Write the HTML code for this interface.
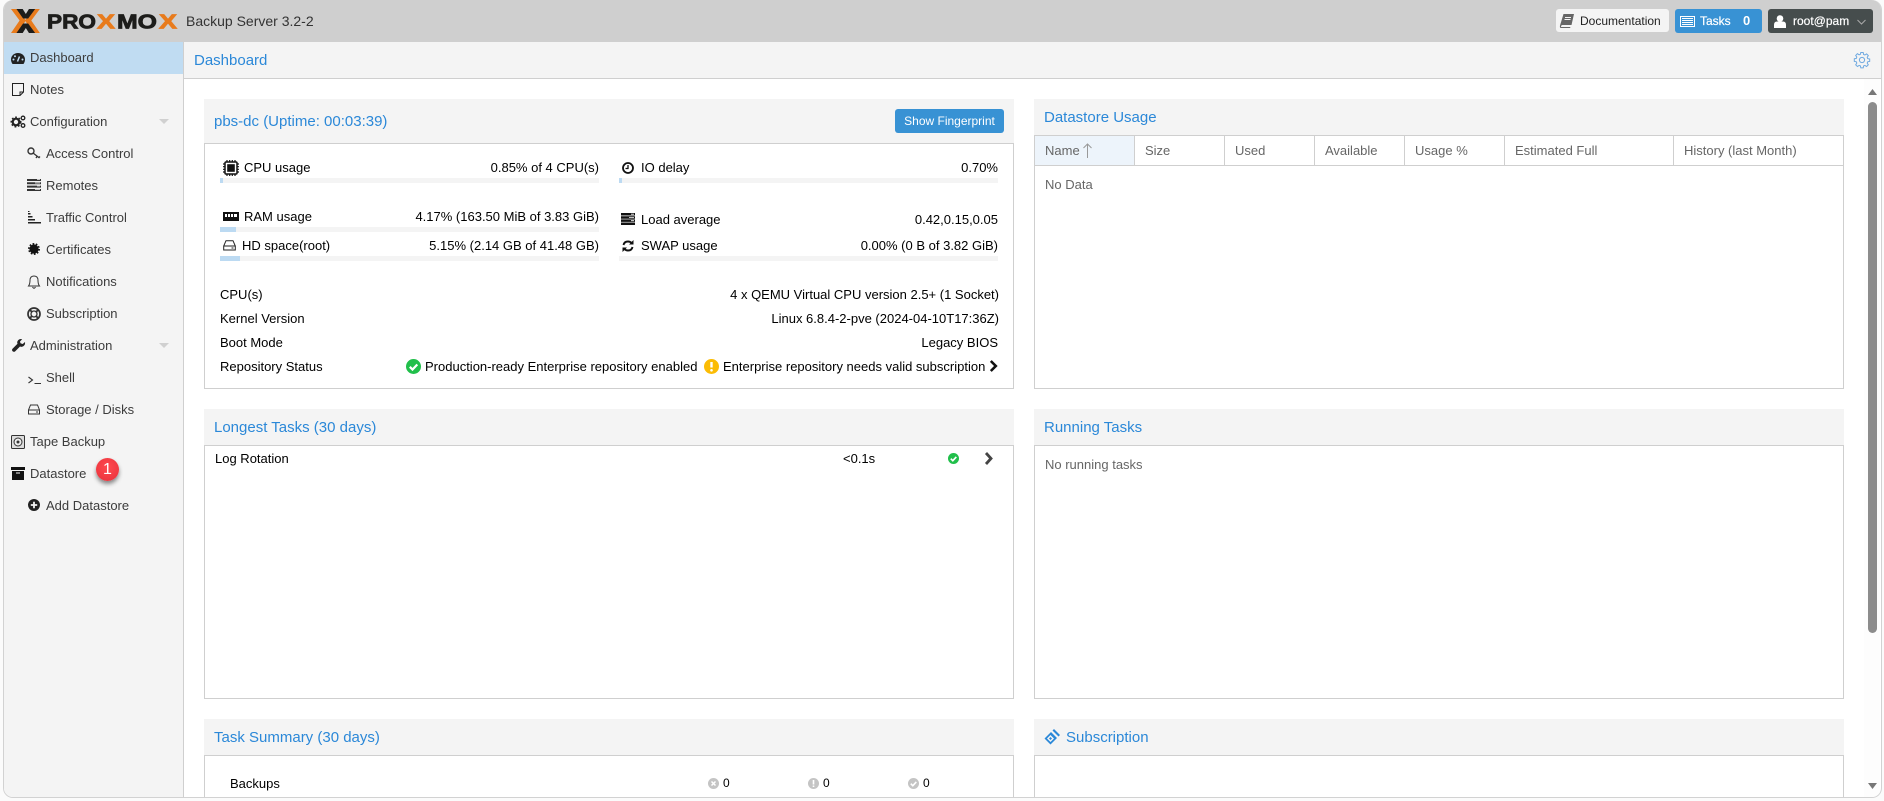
<!DOCTYPE html>
<html><head><meta charset="utf-8"><title>Proxmox Backup Server</title>
<style>
html,body{margin:0;padding:0;width:1884px;height:801px;overflow:hidden;background:#fbfbfb;font-family:"Liberation Sans",Arial,sans-serif;font-size:13px;color:#000}
.a{position:absolute;white-space:nowrap;line-height:20px;margin-top:1px}
.n{margin-top:0}
.b{position:absolute}
.r{text-align:right}
#w{position:absolute;left:3px;top:0;width:1877px;height:797px;border:1px solid #d2d2d2;border-top:0;border-radius:10px;overflow:hidden;background:#fff}
#in{position:absolute;left:-4px;top:0;width:1884px;height:801px}
.s{color:#3c3c3c}
.t{font-size:15px;color:#2b88d8}
.hd{position:absolute;background:#f4f4f4}
.bd{position:absolute;border:1px solid #cfcfcf;box-sizing:border-box;background:#fff}
.bar{position:absolute;height:5px;background:#f4f4f4}
.bar i{display:block;height:5px;background:#bcdaf2}
.th{color:#666}
.c{position:absolute;top:135px;height:31px;width:1px;background:#cfcfcf}
svg{position:absolute;overflow:visible}
</style></head><body>
<div id="w"><div id="in">

<!-- top bar -->
<div class="b" style="left:0;top:0;width:1884px;height:42px;background:#cfcfcf"></div>
<svg style="left:11px;top:9px" width="170" height="25" viewBox="0 0 170 25">
<g transform="scale(.78 1)">
<path d="M0 0h9l10 11.500L9 24H0l11-12.500z" fill="#e87b1c"/>
<path d="M37 0h-9L18 11.500 28 24h9L26 11.500z" fill="#e87b1c"/>
<path d="M7 0h8l4 5 4-5h8L22 9.500h-6.500z" fill="#1d1d1b"/>
<path d="M7 24h8l4-5 4 5h8L22 14.500h-6.500z" fill="#1d1d1b"/>
</g>
<text x="36" y="19.500" font-family="Liberation Sans" font-weight="700" font-size="20" textLength="49" lengthAdjust="spacingAndGlyphs" fill="#1d1d1b" stroke="#1d1d1b" stroke-width=".8">PRO</text>
<text x="86" y="19.500" font-family="Liberation Sans" font-weight="700" font-size="20" textLength="18" lengthAdjust="spacingAndGlyphs" fill="#e87b1c" stroke="#e87b1c" stroke-width=".8">X</text>
<text x="106" y="19.500" font-family="Liberation Sans" font-weight="700" font-size="20" textLength="40" lengthAdjust="spacingAndGlyphs" fill="#1d1d1b" stroke="#1d1d1b" stroke-width=".8">MO</text>
<text x="148" y="19.500" font-family="Liberation Sans" font-weight="700" font-size="20" textLength="18" lengthAdjust="spacingAndGlyphs" fill="#e87b1c" stroke="#e87b1c" stroke-width=".8">X</text>
</svg>
<div class="a n" style="left:186px;top:11px;font-size:14px;color:#333">Backup Server 3.2-2</div>

<div class="b" style="left:1556px;top:9px;width:113px;height:23px;background:#f4f4f4;border-radius:3px"></div>
<svg style="left:1560px;top:14px" width="14" height="14" viewBox="0 0 14 14"><path d="M3.500 0H14l-2.500 11H2.500Q1 11 1 13h9.500L10 14H1Q-.5 14 0 11.500zM5 3h6v1H5zM4.500 5h6v1h-6z" fill="#666" fill-rule="evenodd"/></svg>
<div class="a n" style="left:1580px;top:11px;color:#222;font-size:12px">Documentation</div>

<div class="b" style="left:1675px;top:9px;width:87px;height:24px;background:#3892d4;border-radius:3px"></div>
<svg style="left:1680px;top:16px" width="15" height="11" viewBox="0 0 15 11"><rect x=".5" y=".5" width="14" height="10" fill="#3892d4" stroke="#fff"/><path d="M2 2.500h11M2 4.500h11M2 6.500h11M2 8.500h11" stroke="#fff"/></svg>
<div class="a n" style="left:1700px;top:11px;color:#fff;font-size:12px;-webkit-text-stroke:.2px #fff">Tasks</div>
<div class="a n" style="left:1743px;top:11px;color:#fff;font-weight:700">0</div>

<div class="b" style="left:1768px;top:9px;width:105px;height:24px;background:#464d4d;border-radius:3px"></div>
<svg style="left:1774px;top:15px" width="12" height="13" viewBox="0 0 12 13"><circle cx="6" cy="3.500" r="3.300" fill="#fff"/><path d="M0 13V10q0-3.500 3-3.500h6q3 0 3 3.500v3z" fill="#fff"/></svg>
<div class="a n" style="left:1793px;top:11px;color:#fff;font-size:12px;-webkit-text-stroke:.2px #fff">root@pam</div>
<svg style="left:1857px;top:19px" width="9" height="6" viewBox="0 0 9 6"><path d="M.5 1l4 4 4-4" fill="none" stroke="#aaa"/></svg>

<!-- sidebar -->
<div class="b" style="left:0;top:42px;width:183px;height:759px;background:#f4f4f4;border-right:1px solid #cfcfcf"></div>
<div class="b" style="left:0;top:42px;width:183px;height:32px;background:#c0dcf2"></div>
<div class="a s" style="left:30px;top:47px">Dashboard</div>
<div class="a s" style="left:30px;top:79px">Notes</div>
<div class="a s" style="left:30px;top:111px">Configuration</div>
<div class="a s" style="left:46px;top:143px">Access Control</div>
<div class="a s" style="left:46px;top:175px">Remotes</div>
<div class="a s" style="left:46px;top:207px">Traffic Control</div>
<div class="a s" style="left:46px;top:239px">Certificates</div>
<div class="a s" style="left:46px;top:271px">Notifications</div>
<div class="a s" style="left:46px;top:303px">Subscription</div>
<div class="a s" style="left:30px;top:335px">Administration</div>
<div class="a s" style="left:46px;top:367px">Shell</div>
<div class="a s" style="left:46px;top:399px">Storage / Disks</div>
<div class="a s" style="left:30px;top:431px">Tape Backup</div>
<div class="a s" style="left:30px;top:463px">Datastore</div>
<div class="a s" style="left:46px;top:495px">Add Datastore</div>

<!-- sidebar icons -->
<svg style="left:11px;top:53px" width="14" height="11" viewBox="0 0 14 11"><path d="M7 0c4 0 7 2.800 7 6.500 0 1.600-.5 3-1.500 4.500h-11C.5 9.500 0 8.100 0 6.500 0 2.800 3 0 7 0z" fill="#222"/><path d="M6.500 8.500L8.500 3.500" stroke="#c0dcf2" stroke-width="1.500"/><circle cx="2.500" cy="6.500" r="1" fill="#c0dcf2"/><circle cx="4" cy="3.200" r="1" fill="#c0dcf2"/><circle cx="11.500" cy="6.500" r="1" fill="#c0dcf2"/></svg>
<svg style="left:12px;top:83px" width="12" height="13" viewBox="0 0 12 13"><path d="M.5.500h11v8.500l-3.500 3.500H.5zM8 12.500V9h3.500" fill="none" stroke="#222"/></svg>
<svg style="left:11px;top:115px" width="15" height="13" viewBox="0 0 15 13"><circle cx="5" cy="7" r="3.300" fill="none" stroke="#222" stroke-width="2.200"/><circle cx="5" cy="7" r="4.800" fill="none" stroke="#222" stroke-width="1.400" stroke-dasharray="1.800 1.800"/><circle cx="12" cy="3" r="1.800" fill="none" stroke="#222" stroke-width="1.300"/><circle cx="12" cy="10.500" r="1.800" fill="none" stroke="#222" stroke-width="1.300"/></svg>
<svg style="left:27px;top:147px" width="14" height="13" viewBox="0 0 14 13"><circle cx="4" cy="4" r="3" fill="none" stroke="#333" stroke-width="1.400"/><path d="M6 6l6.500 5M10 9.500l-1 1.500M12 10.500l1-1" stroke="#333" stroke-width="1.300" fill="none"/></svg>
<svg style="left:27px;top:179px" width="14" height="12" viewBox="0 0 14 12"><path d="M0 0h14v2H0zM0 3.300h14v2H0zM0 6.600h14v2H0zM0 10h14v2H0z" fill="#333"/><path d="M10 .5h3M8 4h5M10 7h3M8 10.500h5" stroke="#f4f4f4" stroke-width=".8"/></svg>
<svg style="left:28px;top:211px" width="13" height="13" viewBox="0 0 13 13"><path d="M0 11h13v1.500H0zM0 8h7v1.500H0zM0 5h4.500v1.500H0zM0 2h2.500v1.500H0zM0 0h1.500v1H0z" fill="#222"/></svg>
<svg style="left:28px;top:243px" width="12" height="12" viewBox="0 0 12 12"><circle cx="6" cy="6" r="4.600" fill="#111"/><circle cx="6" cy="6" r="5.200" fill="none" stroke="#111" stroke-width="1.500" stroke-dasharray="1.700 1.570"/></svg>
<svg style="left:28px;top:275px" width="12" height="14" viewBox="0 0 12 14"><path d="M6 1Q2 1 2 5.500 2 9 .5 11h11Q10 9 10 5.500 10 1 6 1zM4.500 12Q6 14.500 7.500 12" fill="none" stroke="#333"/></svg>
<svg style="left:27px;top:307px" width="14" height="14" viewBox="0 0 14 14"><circle cx="7" cy="7" r="6" fill="none" stroke="#333" stroke-width="1.700"/><circle cx="7" cy="7" r="3" fill="none" stroke="#333" stroke-width="1.300"/><path d="M2.500 2.500l2.500 2.500M11.500 2.500L9 5M11.500 11.500L9 9M2.500 11.500L5 9" stroke="#333" stroke-width="1.800"/></svg>
<svg style="left:12px;top:339px" width="13" height="13" viewBox="0 0 13 13"><path d="M13 3l-2.300 2L8.500 4.300 8 2.500 10.200.3Q7.500-.6 6 1.400 4.700 3 5.500 4.800L.4 9.900q-.8 1.300.2 2.400 1.200 1 2.400.2l5-5q1.800.8 3.500-.4Q13.500 5.600 13 3z" fill="#222"/></svg>
<svg style="left:28px;top:373px" width="13" height="12" viewBox="0 0 13 12"><path d="M.5 4l4 3-4 3M6.500 10.500H13" fill="none" stroke="#333" stroke-width="1.100"/></svg>
<svg style="left:28px;top:404px" width="12" height="11" viewBox="0 0 12 11"><path d="M2.500 1h7L11.500 6v4H.5V6zM.5 6h11" fill="none" stroke="#333"/><path d="M8 8h2" stroke="#333"/></svg>
<svg style="left:11px;top:435px" width="14" height="14" viewBox="0 0 14 14"><rect x=".5" y=".5" width="13" height="13" rx="1" fill="#ddd" stroke="#333"/><circle cx="7" cy="7" r="4" fill="#eee" stroke="#333"/><circle cx="7" cy="7" r="1.500" fill="#333"/></svg>
<svg style="left:11px;top:467px" width="14" height="13" viewBox="0 0 14 13"><path d="M0 0h14v3H0zM1 4h12v9H1z" fill="#111"/><path d="M5 6h4" stroke="#f4f4f4" stroke-width="1"/></svg>
<svg style="left:28px;top:499px" width="12" height="12" viewBox="0 0 12 12"><circle cx="6" cy="6" r="6" fill="#222"/><path d="M6 2.800v6.400M2.800 6h6.400" stroke="#f4f4f4" stroke-width="1.800"/></svg>
<svg style="left:159px;top:119px" width="10" height="5" viewBox="0 0 10 5"><path d="M0 0h10L5 5z" fill="#d0d0d0"/></svg>
<svg style="left:159px;top:343px" width="10" height="5" viewBox="0 0 10 5"><path d="M0 0h10L5 5z" fill="#d0d0d0"/></svg>

<!-- badge -->
<div class="b" style="left:96px;top:458px;width:23px;height:23px;border-radius:50%;background:radial-gradient(circle at 50% 40%,#ff4a4f,#e8303a);box-shadow:0 3px 4px rgba(0,0,0,.45)"></div>
<div class="a n" style="left:96px;top:459px;width:23px;text-align:center;color:#fff;font-size:16px;line-height:21px">1</div>

<!-- header -->
<div class="b" style="left:184px;top:42px;width:1700px;height:36px;background:#f4f4f4;border-bottom:1px solid #cfcfcf"></div>
<div class="a t" style="left:194px;top:50px">Dashboard</div>
<svg style="left:1854px;top:52px" width="16" height="16" viewBox="0 0 16 16"><circle cx="8" cy="8" r="2.600" fill="none" stroke="#6fa9e0"/><path d="M6.800.5h2.400l.4 2 1.300.5 1.700-1.100 1.700 1.700-1.100 1.700.5 1.300 2 .4v2.400l-2 .4-.5 1.300 1.100 1.700-1.700 1.700-1.700-1.100-1.300.5-.4 2H6.800l-.4-2-1.300-.5-1.700 1.100-1.700-1.700 1.100-1.700-.5-1.300-2-.4V6.800l2-.4.5-1.300-1.100-1.700 1.700-1.700 1.700 1.100 1.300-.5z" fill="none" stroke="#6fa9e0"/></svg>

<!-- scrollbar -->
<div class="b" style="left:1864px;top:79px;width:16px;height:722px;background:#fdfdfd"></div>
<div class="b" style="left:1868px;top:102px;width:9px;height:531px;background:#8c8c8c;border-radius:5px"></div>
<svg style="left:1868px;top:89px" width="9" height="6" viewBox="0 0 9 6"><path d="M0 6L4.500 0 9 6z" fill="#777"/></svg>
<svg style="left:1868px;top:783px" width="9" height="6" viewBox="0 0 9 6"><path d="M0 0h9L4.500 6z" fill="#777"/></svg>

<!-- panel 1 -->
<div class="hd" style="left:204px;top:99px;width:810px;height:44px"></div>
<div class="bd" style="left:204px;top:143px;width:810px;height:246px"></div>
<div class="a t" style="left:214px;top:111px">pbs-dc (Uptime: 00:03:39)</div>
<div class="b" style="left:895px;top:109px;width:109px;height:24px;background:#3892d4;border-radius:3px"></div>
<div class="a n" style="left:895px;top:111px;width:109px;text-align:center;color:#fff;font-size:12px;">Show Fingerprint</div>

<svg style="left:223px;top:160px" width="16" height="16" viewBox="0 0 16 16"><rect x="2" y="2" width="12" height="12" rx="1" fill="#fff" stroke="#111" stroke-width="1.500"/><rect x="4.200" y="4.200" width="7.600" height="7.600" fill="#111"/><path d="M4 0v2M6.700 0v2M9.300 0v2M12 0v2M4 14v2M6.700 14v2M9.300 14v2M12 14v2M0 4h2M0 6.700h2M0 9.300h2M0 12h2M14 4h2M14 6.700h2M14 9.300h2M14 12h2" stroke="#111" stroke-width="1.200"/></svg>
<div class="a" style="left:244px;top:157px">CPU usage</div>
<div class="a r" style="left:399px;width:200px;top:157px">0.85% of 4 CPU(s)</div>
<div class="bar" style="left:220px;top:178px;width:379px"><i style="width:3px"></i></div>

<svg style="left:223px;top:212px" width="16" height="9" viewBox="0 0 16 9"><path d="M0 0h16v9H0z" fill="#111"/><path d="M2 2h2v3H2zM5 2h2v3H5zM8 2h2v3H8zM11 2h3v3h-3z" fill="#fff"/></svg>
<div class="a" style="left:244px;top:206px">RAM usage</div>
<div class="a r" style="left:349px;width:250px;top:206px">4.17% (163.50 MiB of 3.83 GiB)</div>
<div class="bar" style="left:220px;top:227px;width:379px"><i style="width:16px"></i></div>

<svg style="left:223px;top:240px" width="13" height="11" viewBox="0 0 13 11"><path d="M3 .7h7L12.300 6v4H.7V6zM.7 6h11.600" fill="none" stroke="#222"/><path d="M8.500 8h2" stroke="#222"/></svg>
<div class="a" style="left:242px;top:235px">HD space(root)</div>
<div class="a r" style="left:349px;width:250px;top:235px">5.15% (2.14 GB of 41.48 GB)</div>
<div class="bar" style="left:220px;top:256px;width:379px"><i style="width:20px"></i></div>

<svg style="left:622px;top:162px" width="12" height="12" viewBox="0 0 12 12"><circle cx="6" cy="6" r="5" fill="none" stroke="#111" stroke-width="1.800"/><path d="M6 3v3.500H3.500" fill="none" stroke="#111" stroke-width="1.300"/></svg>
<div class="a" style="left:641px;top:157px">IO delay</div>
<div class="a r" style="left:798px;width:200px;top:157px">0.70%</div>
<div class="bar" style="left:619px;top:178px;width:379px"><i style="width:3px"></i></div>

<svg style="left:621px;top:213px" width="14" height="12" viewBox="0 0 14 12"><path d="M0 0h14v2.500H0zM0 3.200h14v2.500H0zM0 6.400h14v2.500H0zM0 9.500h14V12H0z" fill="#111"/><path d="M10 1.200h3M8 4.500h5M10 7.700h3" stroke="#fff" stroke-width=".8"/></svg>
<div class="a" style="left:641px;top:209px">Load average</div>
<div class="a r" style="left:798px;width:200px;top:209px">0.42,0.15,0.05</div>

<svg style="left:622px;top:240px" width="12" height="12" viewBox="0 0 12 12"><path d="M1.500 5Q2.300 1.500 6 1.500q2.200 0 3.500 1.500M10.500 7Q9.700 10.500 6 10.500 3.800 10.500 2.500 9" fill="none" stroke="#111" stroke-width="1.900"/><path d="M11.500 0v4.500H7zM.5 12V7.500H5z" fill="#111"/></svg>
<div class="a" style="left:641px;top:235px">SWAP usage</div>
<div class="a r" style="left:748px;width:250px;top:235px">0.00% (0 B of 3.82 GiB)</div>
<div class="bar" style="left:619px;top:256px;width:379px"></div>

<div class="a" style="left:220px;top:284px">CPU(s)</div>
<div class="a" style="left:220px;top:308px">Kernel Version</div>
<div class="a" style="left:220px;top:332px">Boot Mode</div>
<div class="a" style="left:220px;top:356px">Repository Status</div>
<div class="a r" style="left:599px;width:400px;top:284px">4 x QEMU Virtual CPU version 2.5+ (1 Socket)</div>
<div class="a r" style="left:599px;width:400px;top:308px">Linux 6.8.4-2-pve (2024-04-10T17:36Z)</div>
<div class="a r" style="left:598px;width:400px;top:332px">Legacy BIOS</div>

<svg style="left:406px;top:359px" width="15" height="15" viewBox="0 0 15 15"><circle cx="7.500" cy="7.500" r="7.500" fill="#21bf4b"/><path d="M3.800 7.800l2.700 2.700 4.800-5" fill="none" stroke="#fff" stroke-width="2.200"/></svg>
<div class="a" style="left:425px;top:356px">Production-ready Enterprise repository enabled</div>
<svg style="left:704px;top:359px" width="15" height="15" viewBox="0 0 15 15"><circle cx="7.500" cy="7.500" r="7.500" fill="#fbbc05"/><path d="M7.500 3v5.500" stroke="#fff" stroke-width="2.400"/><circle cx="7.500" cy="11.300" r="1.300" fill="#fff"/></svg>
<div class="a" style="left:723px;top:356px">Enterprise repository needs valid subscription</div>
<svg style="left:989px;top:360px" width="9" height="12" viewBox="0 0 9 12"><path d="M1.800 1l5 5-5 5" fill="none" stroke="#111" stroke-width="2.600"/></svg>

<!-- datastore usage -->
<div class="hd" style="left:1034px;top:99px;width:810px;height:36px"></div>
<div class="bd" style="left:1034px;top:135px;width:810px;height:254px"></div>
<div class="a t" style="left:1044px;top:107px">Datastore Usage</div>
<div class="b" style="left:1035px;top:136px;width:99px;height:29px;background:#edf4fb"></div>
<div class="b" style="left:1035px;top:165px;width:808px;height:1px;background:#cfcfcf"></div>
<div class="c" style="left:1134px"></div><div class="c" style="left:1224px"></div><div class="c" style="left:1314px"></div><div class="c" style="left:1404px"></div><div class="c" style="left:1504px"></div><div class="c" style="left:1673px"></div>
<div class="a n th" style="left:1045px;top:141px">Name</div>
<svg style="left:1083px;top:143px" width="9" height="15" viewBox="0 0 9 15"><path d="M4.500 1v14M.5 5l4-4 4 4" fill="none" stroke="#999"/></svg>
<div class="a n th" style="left:1145px;top:141px">Size</div>
<div class="a n th" style="left:1235px;top:141px">Used</div>
<div class="a n th" style="left:1325px;top:141px">Available</div>
<div class="a n th" style="left:1415px;top:141px">Usage %</div>
<div class="a n th" style="left:1515px;top:141px">Estimated Full</div>
<div class="a n th" style="left:1684px;top:141px">History (last Month)</div>
<div class="a th" style="left:1045px;top:174px">No Data</div>

<!-- longest tasks -->
<div class="hd" style="left:204px;top:409px;width:810px;height:36px"></div>
<div class="bd" style="left:204px;top:445px;width:810px;height:254px"></div>
<div class="a t" style="left:214px;top:417px">Longest Tasks (30 days)</div>
<div class="a n" style="left:215px;top:449px">Log Rotation</div>
<div class="a n" style="left:843px;top:449px">&lt;0.1s</div>
<svg style="left:948px;top:453px" width="11" height="11" viewBox="0 0 11 11"><circle cx="5.500" cy="5.500" r="5.500" fill="#21bf4b"/><path d="M2.800 5.700l2 2 3.500-3.800" fill="none" stroke="#fff" stroke-width="1.700"/></svg>
<svg style="left:984px;top:452px" width="10" height="13" viewBox="0 0 10 13"><path d="M2 1l5 5.500-5 5.500" fill="none" stroke="#444" stroke-width="2.800"/></svg>

<!-- running tasks -->
<div class="hd" style="left:1034px;top:409px;width:810px;height:36px"></div>
<div class="bd" style="left:1034px;top:445px;width:810px;height:254px"></div>
<div class="a t" style="left:1044px;top:417px">Running Tasks</div>
<div class="a" style="left:1045px;top:454px;color:#666">No running tasks</div>

<!-- task summary -->
<div class="hd" style="left:204px;top:719px;width:810px;height:36px"></div>
<div class="bd" style="left:204px;top:755px;width:810px;height:60px"></div>
<div class="a t" style="left:214px;top:727px">Task Summary (30 days)</div>
<div class="a" style="left:230px;top:773px">Backups</div>
<svg style="left:708px;top:778px" width="11" height="11" viewBox="0 0 11 11"><circle cx="5.500" cy="5.500" r="5.500" fill="#c4c4c4"/><path d="M3.500 3.500l4 4M7.500 3.500l-4 4" stroke="#fff" stroke-width="1.500"/></svg>
<div class="a n" style="left:723px;top:773px;font-size:12px">0</div>
<svg style="left:808px;top:778px" width="11" height="11" viewBox="0 0 11 11"><circle cx="5.500" cy="5.500" r="5.500" fill="#c4c4c4"/><path d="M5.500 2v4.500M5.500 7.500v1.500" stroke="#fff" stroke-width="1.600"/></svg>
<div class="a n" style="left:823px;top:773px;font-size:12px">0</div>
<svg style="left:908px;top:778px" width="11" height="11" viewBox="0 0 11 11"><circle cx="5.500" cy="5.500" r="5.500" fill="#c4c4c4"/><path d="M2.800 5.700l2 2 3.500-3.800" fill="none" stroke="#fff" stroke-width="1.600"/></svg>
<div class="a n" style="left:923px;top:773px;font-size:12px">0</div>

<!-- subscription -->
<div class="hd" style="left:1034px;top:719px;width:810px;height:36px"></div>
<div class="bd" style="left:1034px;top:755px;width:810px;height:60px"></div>
<svg style="left:1044px;top:729px" width="16" height="16" viewBox="0 0 16 16"><path d="M10 0l6 6-1.500 1.500L8.500 1.500zM7 3l6 6-6.500 6.500-6-6z" fill="#2b88d8"/><path d="M6.500 6l3.500 3.500L6.500 13 3 9.500z" fill="#f4f4f4"/><path d="M6.500 8l1.500 1.500L6.500 11 5 9.500z" fill="#2b88d8"/></svg>
<div class="a t" style="left:1066px;top:727px">Subscription</div>

</div></div>
</body></html>
